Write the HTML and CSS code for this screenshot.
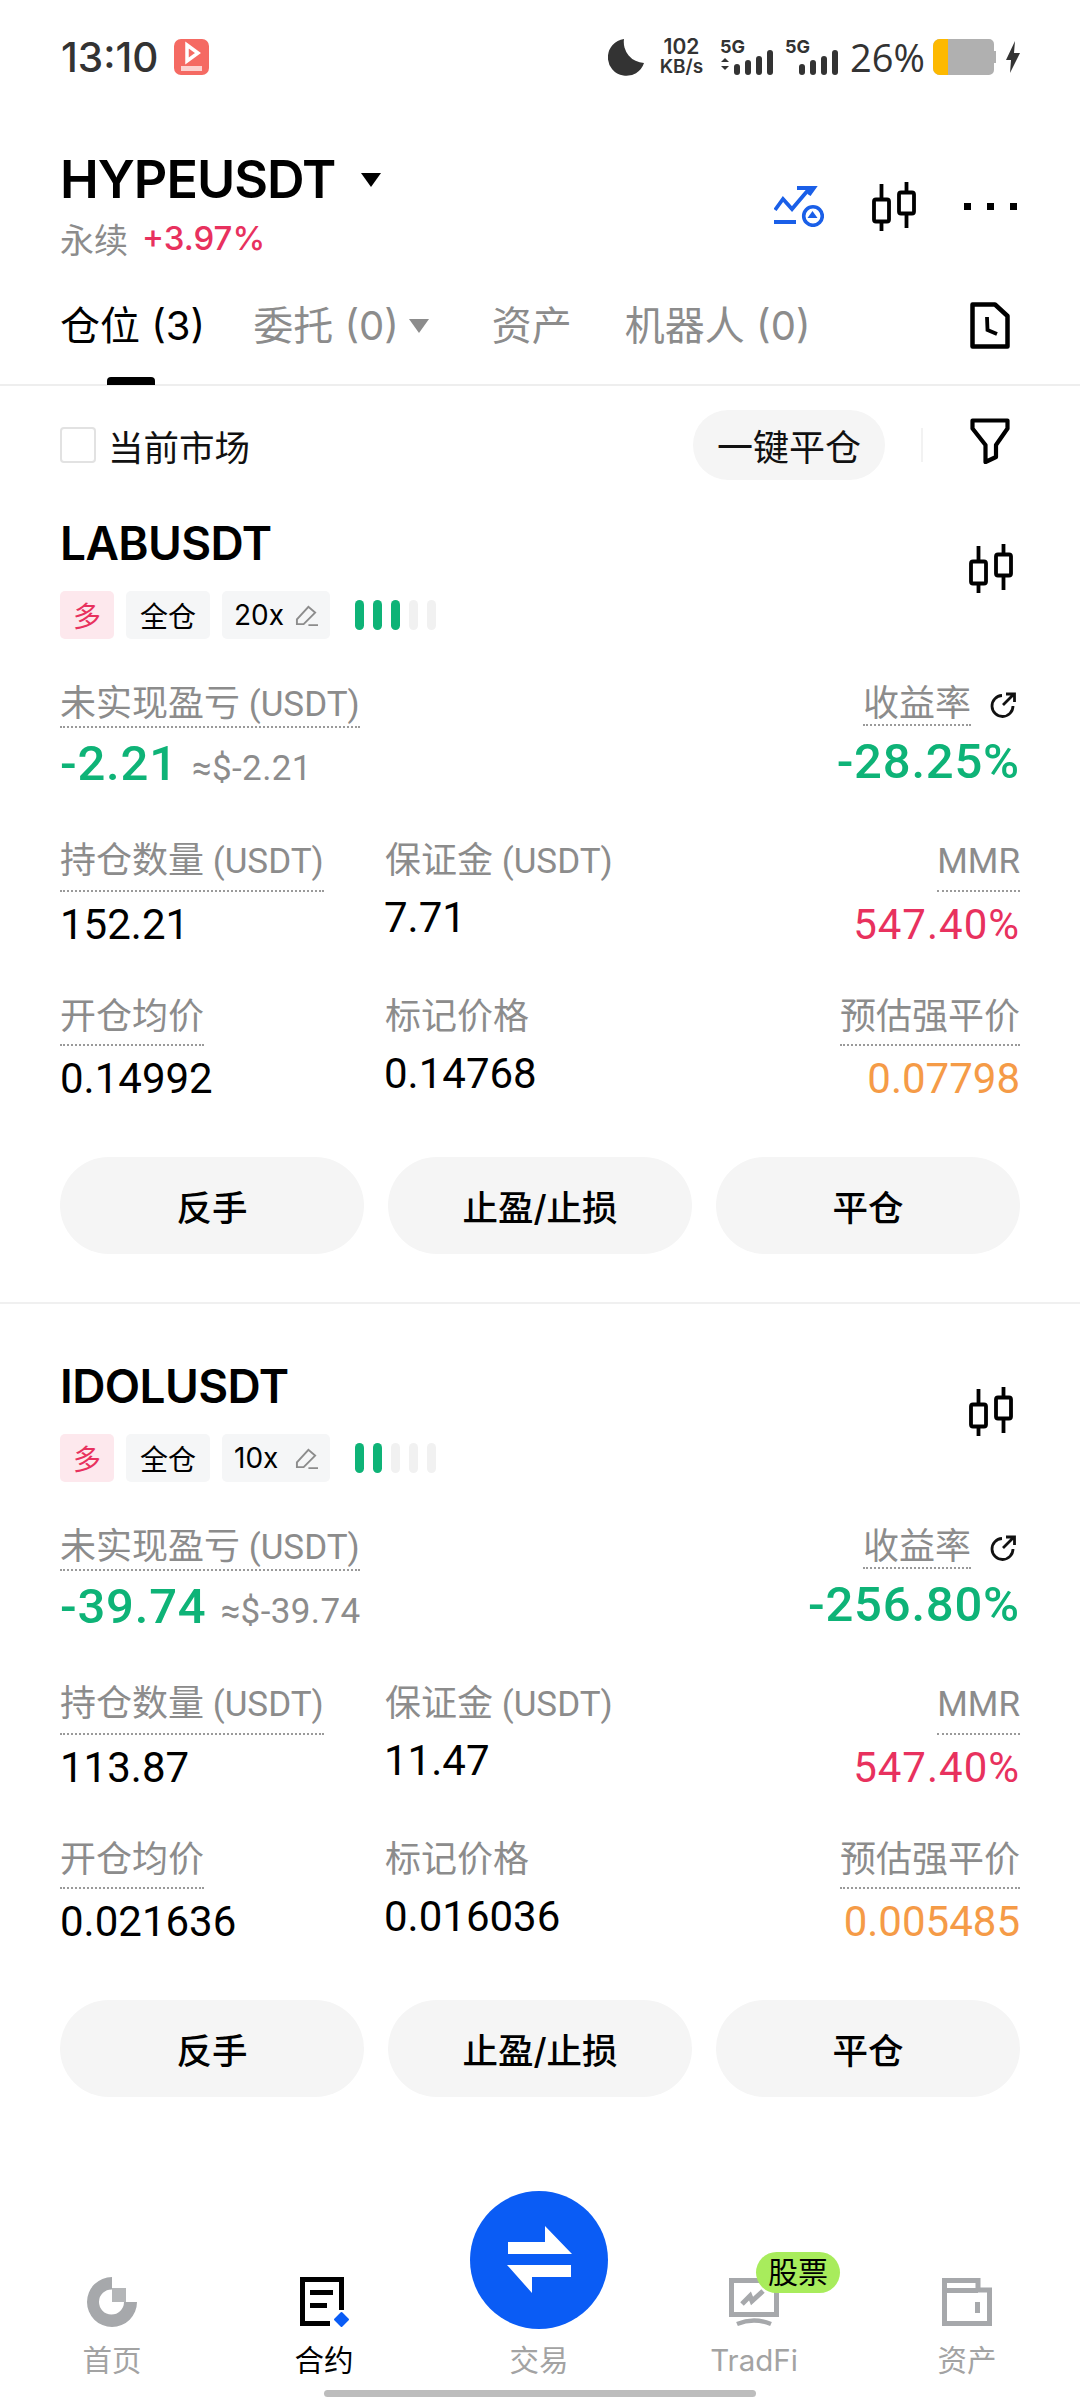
FILE: index.html
```html
<!DOCTYPE html>
<html lang="zh">
<head>
<meta charset="utf-8">
<title>HYPEUSDT</title>
<link rel="stylesheet" href="styles.css">
</head>
<body>
<svg class="defs" width="0" height="0" aria-hidden="true">
  <symbol id="candles" viewBox="0 0 44 49">
    <path d="M9.500 2v47M34.500 0v46" fill="none" stroke="currentColor" stroke-width="3.800"/>
    <rect x="2" y="17.500" width="15" height="22" rx="2" fill="#fff" stroke="currentColor" stroke-width="3.800"/>
    <rect x="27" y="10.500" width="15" height="21" rx="2" fill="#fff" stroke="currentColor" stroke-width="3.800"/>
  </symbol>
  <symbol id="share" viewBox="0 0 28 28">
    <path d="M13 4.500A10.500 10.500 0 1 0 24 15" fill="none" stroke="currentColor" stroke-width="2.800"/>
    <path d="M14 14 25 3M17 3h8.500v8" fill="none" stroke="currentColor" stroke-width="2.800"/>
  </symbol>
  <symbol id="pen" viewBox="0 0 24 24">
    <path d="M2 21v-5L14 3l7 6L9 21zM14 22h10" fill="none" stroke="currentColor" stroke-width="2"/>
  </symbol>
</svg>

<header class="status">
  <div class="status-left">
    <span class="clock">13:10</span>
    <svg class="app-badge" viewBox="0 0 35 36"><rect width="35" height="36" rx="7" fill="#f56a63"/><path d="M13 6l11 8-11 8z" fill="none" stroke="#fff" stroke-width="3.500"/><rect x="7" y="27" width="21" height="5" fill="#fff" opacity=".7"/></svg>
  </div>
  <div class="status-right">
    <svg class="moon" viewBox="0 0 36 37"><path d="M16 0A18.500 18.500 0 1 0 36 24 21 21 0 0 1 16 0z" fill="#333"/></svg>
    <div class="speed"><span>102</span><span>KB/s</span></div>
    <div class="signal">
      <span class="net">5G</span>
      <svg viewBox="0 0 54 25" class="bars"><path d="M1 12l4-4 4 4zM1 16l4 4 4-4z" fill="#333"/><rect x="14" y="14" width="6" height="11" rx="3" fill="#333"/><rect x="25" y="10" width="6" height="15" rx="3" fill="#333"/><rect x="36" y="6" width="6" height="19" rx="3" fill="#333"/><rect x="47" y="0" width="6" height="25" rx="3" fill="#333"/></svg>
    </div>
    <div class="signal">
      <span class="net">5G</span>
      <svg viewBox="0 0 54 25" class="bars"><rect x="14" y="14" width="6" height="11" rx="3" fill="#333"/><rect x="25" y="10" width="6" height="15" rx="3" fill="#333"/><rect x="36" y="6" width="6" height="19" rx="3" fill="#333"/><rect x="47" y="0" width="6" height="25" rx="3" fill="#333"/></svg>
    </div>
    <span class="battery-pct">26%</span>
    <svg class="battery" viewBox="0 0 63 36"><path d="M7 0h49a5 5 0 0 1 5 5v7h2v12h-2v7a5 5 0 0 1-5 5H7a7 7 0 0 1-7-7V7a7 7 0 0 1 7-7z" fill="#b0b0b0"/><path d="M7 0h8v36H7a7 7 0 0 1-7-7V7a7 7 0 0 1 7-7z" fill="#fdb900"/></svg>
    <svg class="bolt" viewBox="0 0 14 32"><path d="M9 0 0 19h5l-1 13 10-20H8z" fill="#333"/></svg>
  </div>
</header>

<section class="market">
  <div class="market-info">
    <div class="symbol-row"><h1 class="symbol">HYPEUSDT</h1><span class="caret"></span></div>
    <div class="sub-row"><span class="perp">永续</span><span class="change">+3.97%</span></div>
  </div>
  <div class="market-actions">
    <svg class="ic-strategy" viewBox="0 0 50 41"><path d="M1 24 9 13l9 10L35 3M23 2h17l-5 7" fill="none" stroke="#1a5fe8" stroke-width="3.800"/><path d="M0 36h22" stroke="#1a5fe8" stroke-width="4"/><circle cx="39" cy="30" r="9.300" fill="none" stroke="#1a5fe8" stroke-width="3.600"/><path d="M38.500 25l5 7h-10z" fill="#1a5fe8"/></svg>
    <svg class="ic-candles"><use href="#candles"/></svg>
    <svg class="ic-more" viewBox="0 0 53 7"><rect width="7" height="7" fill="#000"/><rect x="23" width="7" height="7" fill="#000"/><rect x="46" width="7" height="7" fill="#000"/></svg>
  </div>
</section>

<nav class="tabs">
  <a class="tab active">仓位 (3)</a>
  <a class="tab has-caret">委托 (0)<span class="tab-caret"></span></a>
  <a class="tab">资产</a>
  <a class="tab bots">机器人 (0)</a>
  <svg class="ic-history" viewBox="0 0 40 47"><path d="M2.500 2.500H25L37.500 14v30.500h-35z" fill="none" stroke="#000" stroke-width="4.500" stroke-linejoin="round"/><path d="M17 15l.5 13L27 32" fill="none" stroke="#000" stroke-width="3.800"/></svg>
</nav>

<div class="filters">
  <label class="market-check"><span class="checkbox"></span>当前市场</label>
  <div class="filter-actions">
    <button class="close-all">一键平仓</button>
    <span class="vr"></span>
    <svg class="ic-filter" viewBox="0 0 40 46"><path d="M2.500 2.500h35v8L26 27v12l-10.500 5V27L2.500 10.500z" fill="none" stroke="#000" stroke-width="4.200" stroke-linejoin="round"/></svg>
  </div>
</div>

<main>
  <article class="position">
    <div class="pos-head">
      <div>
        <h2 class="pos-symbol">LABUSDT</h2>
        <div class="tags">
          <span class="tag long">多</span>
          <span class="tag">全仓</span>
          <span class="tag leverage">20x<svg class="ic-pen"><use href="#pen"/></svg></span>
          <span class="risk"><i class="on"></i><i class="on"></i><i class="on"></i><i></i><i></i></span>
        </div>
      </div>
      <svg class="ic-candles pos-candles"><use href="#candles"/></svg>
    </div>
    <div class="pnl">
      <div>
        <span class="label dotted">未实现盈亏<span class="unit"> (USDT)</span></span>
        <div class="pnl-value"><span class="big green">-2.21</span><span class="approx">≈$-2.21</span></div>
      </div>
      <div class="right">
        <div class="label-row"><span class="label dotted">收益率</span><svg class="ic-share"><use href="#share"/></svg></div>
        <span class="big green">-28.25%</span>
      </div>
    </div>
    <div class="stats">
      <div class="stat"><span class="label dotted">持仓数量<span class="unit"> (USDT)</span></span><span class="val">152.21</span></div>
      <div class="stat mid"><span class="label">保证金<span class="unit"> (USDT)</span></span><span class="val">7.71</span></div>
      <div class="stat right"><span class="label dotted"><span class="unit">MMR</span></span><span class="val pink">547.40%</span></div>
      <div class="stat"><span class="label dotted">开仓均价</span><span class="val">0.14992</span></div>
      <div class="stat mid"><span class="label">标记价格</span><span class="val">0.14768</span></div>
      <div class="stat right"><span class="label dotted">预估强平价</span><span class="val orange">0.07798</span></div>
    </div>
    <div class="actions"><button>反手</button><button>止盈/止损</button><button>平仓</button></div>
  </article>

  <article class="position">
    <div class="pos-head">
      <div>
        <h2 class="pos-symbol">IDOLUSDT</h2>
        <div class="tags">
          <span class="tag long">多</span>
          <span class="tag">全仓</span>
          <span class="tag leverage">10x<svg class="ic-pen"><use href="#pen"/></svg></span>
          <span class="risk"><i class="on"></i><i class="on"></i><i></i><i></i><i></i></span>
        </div>
      </div>
      <svg class="ic-candles pos-candles"><use href="#candles"/></svg>
    </div>
    <div class="pnl">
      <div>
        <span class="label dotted">未实现盈亏<span class="unit"> (USDT)</span></span>
        <div class="pnl-value"><span class="big green">-39.74</span><span class="approx">≈$-39.74</span></div>
      </div>
      <div class="right">
        <div class="label-row"><span class="label dotted">收益率</span><svg class="ic-share"><use href="#share"/></svg></div>
        <span class="big green">-256.80%</span>
      </div>
    </div>
    <div class="stats">
      <div class="stat"><span class="label dotted">持仓数量<span class="unit"> (USDT)</span></span><span class="val">113.87</span></div>
      <div class="stat mid"><span class="label">保证金<span class="unit"> (USDT)</span></span><span class="val">11.47</span></div>
      <div class="stat right"><span class="label dotted"><span class="unit">MMR</span></span><span class="val pink">547.40%</span></div>
      <div class="stat"><span class="label dotted">开仓均价</span><span class="val">0.021636</span></div>
      <div class="stat mid"><span class="label">标记价格</span><span class="val">0.016036</span></div>
      <div class="stat right"><span class="label dotted">预估强平价</span><span class="val orange">0.005485</span></div>
    </div>
    <div class="actions"><button>反手</button><button>止盈/止损</button><button>平仓</button></div>
  </article>
</main>

<footer class="tabbar">
  <a class="nav-item">
    <svg viewBox="0 0 50 50"><path d="M25 0A25 25 0 1 0 50 25H37A12.500 12.500 0 1 1 25 12.500z" fill="#a6a8ab"/><rect x="25" y="11" width="14" height="14" fill="#b4b6b8"/></svg>
    <span>首页</span>
  </a>
  <a class="nav-item current">
    <svg viewBox="0 0 50 50"><path d="M42.500 33V2.500h-39v44H31" fill="none" stroke="#000" stroke-width="5"/><path d="M11 15.500h23M11 28.500h17" stroke="#000" stroke-width="5"/><path d="M42.500 36l6.500 6.500-6.500 6.500-6.500-6.500z" fill="#0a5cf5" stroke="#0a5cf5" stroke-width="2" stroke-linejoin="round"/></svg>
    <span>合约</span>
  </a>
  <a class="nav-item trade">
    <span class="trade-btn"><svg viewBox="0 0 66 70"><path d="M2 17h37V1l27 28H2zM65 40H1l25 28V52h39z" fill="#fff"/></svg></span>
    <span>交易</span>
  </a>
  <a class="nav-item">
    <span class="badge">股票</span>
    <svg viewBox="0 0 50 50"><path d="M2.500 3.500h45v34h-45z" fill="none" stroke="#a6a8ab" stroke-width="5"/><path d="M8 47q17-7 34 0" fill="none" stroke="#a6a8ab" stroke-width="4.500"/><path d="M13 27l8-8 2 5 11-10" fill="none" stroke="#a6a8ab" stroke-width="5"/></svg>
    <span>TradFi</span>
  </a>
  <a class="nav-item">
    <svg viewBox="0 0 50 50"><path d="M2.500 46.500v-43H36V13h11.500v33.500zM2.500 13.500H36" fill="none" stroke="#a6a8ab" stroke-width="5"/><rect x="33" y="25" width="5" height="11" fill="#a6a8ab"/></svg>
    <span>资产</span>
  </a>
  <span class="home-bar"></span>
</footer>
</body>
</html>
```

FILE: styles.css
```css
* { box-sizing: border-box; margin: 0; padding: 0; }

html, body { background: #fff; }

body {
  width: 1080px;
  height: 2400px;
  position: relative;
  overflow: hidden;
  color: #000;
  font-family: Inter, "Noto Sans CJK SC", sans-serif;
}

.defs { position: absolute; }

/* System status bar */
.status {
  height: 114px;
  padding: 0 60px 0 61px;
  display: flex;
  align-items: center;
  justify-content: space-between;
  color: #333;
}
.status-left { display: flex; align-items: center; gap: 16px; }
.clock { font-size: 40.5px; font-weight: 500; }
.app-badge { width: 35px; height: 36px; }
.status-right { display: flex; align-items: center; }
.moon { width: 36px; height: 37px; margin-right: 16px; }
.speed {
  width: 43px;
  display: flex;
  flex-direction: column;
  align-items: center;
  font-size: 19px;
  line-height: 20px;
  font-weight: 600;
  margin-right: 17px;
  white-space: nowrap;
}
.speed span:first-child { font-size: 21px; }
.signal { position: relative; width: 65px; height: 36px; }
.net {
  position: absolute;
  left: 0;
  top: 0;
  font-size: 18px;
  line-height: 16px;
  font-weight: 700;
}
.bars { position: absolute; left: 0; bottom: 0; width: 54px; height: 25px; }
.battery-pct { font-family: "Open Sans", sans-serif; font-size: 38px; width: 73px; margin-right: 10px; white-space: nowrap; }
.battery { width: 63px; height: 36px; margin-right: 10px; }
.bolt { width: 14px; height: 32px; }

/* Market header */
.market {
  height: 176px;
  padding: 36px 63px 0 60px;
  display: flex;
  justify-content: space-between;
  align-items: flex-start;
}
.symbol-row { display: flex; align-items: center; height: 60px; }
.symbol { font-size: 52px; font-weight: 600; letter-spacing: -1px; line-height: 60px; }
.caret {
  margin-left: 26px;
  width: 0;
  height: 0;
  border-left: 10px solid transparent;
  border-right: 10px solid transparent;
  border-top: 14px solid #000;
}
.sub-row { display: flex; align-items: center; gap: 14px; margin-top: 6px; height: 44px; }
.perp { font-size: 34px; color: #8c8c8c; }
.change { font-size: 33px; color: #e8315e; font-weight: 500; }
.market-actions { display: flex; align-items: center; gap: 48px; margin-top: 32px; }
.ic-strategy { width: 50px; height: 41px; }
.ic-candles { width: 44px; height: 49px; display: block; color: #000; }
.ic-more { width: 53px; height: 7px; }

/* Section tabs */
.tabs {
  height: 96px;
  padding: 0 70px 0 60px;
  display: flex;
  align-items: flex-start;
  gap: 48px;
  border-bottom: 2px solid #eeeeee;
  position: relative;
}
.tab { font-size: 40px; line-height: 52px; margin-top: 10px; color: #8c8c8c; display: flex; align-items: center; white-space: nowrap; }
.tab.active { color: #000; position: relative; }
.tab.active::after {
  content: "";
  position: absolute;
  left: 47px;
  top: 77px;
  width: 48px;
  height: 8px;
  background: #000;
  border-radius: 4px 4px 0 0;
}
.has-caret { margin-right: 15px; }
.tab.bots { margin-left: 5px; }
.tab-caret {
  margin-left: 10px;
  border-left: 10px solid transparent;
  border-right: 10px solid transparent;
  border-top: 14px solid #8c8c8c;
}
.ic-history { width: 40px; height: 47px; margin-left: auto; margin-top: 12px; }

/* Filter row */
.filters {
  height: 95px;
  padding: 24px 70px 0 60px;
  display: flex;
  justify-content: space-between;
  align-items: flex-start;
}
.market-check { display: flex; align-items: center; gap: 12px; font-size: 35.5px; height: 70px; color: #111; }
.checkbox { width: 36px; height: 36px; border: 2px solid #e2e2e2; border-radius: 4px; }
.filter-actions { display: flex; align-items: center; gap: 36px; }
.close-all {
  width: 192px;
  height: 70px;
  border: 0;
  border-radius: 35px;
  background: #f5f5f5;
  font: inherit;
  font-size: 36px;
  color: #111;
}
.vr { width: 2px; height: 34px; background: #f2f2f2; }
.ic-filter { width: 40px; height: 46px; margin-left: 11px; margin-top: -8px; }

/* Position card */
.position { padding: 34px 60px 0; }
.position:first-child { height: 823px; border-bottom: 2px solid #f0f0f0; }
.position + .position { margin-top: 20px; }
.pos-head { display: flex; justify-content: space-between; align-items: flex-start; height: 167px; }
.pos-symbol { font-size: 46px; font-weight: 600; letter-spacing: -0.6px; line-height: 56px; }
.pos-candles { margin-top: 29px; margin-right: 7px; }
.tags { display: flex; align-items: center; gap: 12px; margin-top: 20px; height: 48px; }
.tag {
  height: 48px;
  padding: 0 14px;
  background: #f5f6f7;
  border-radius: 5px;
  font-size: 28px;
  display: flex;
  align-items: center;
}
.tag.long { width: 54px; padding: 0; justify-content: center; background: #fde8ed; color: #e8315e; }
.tag.leverage { width: 108px; padding: 0 12px; justify-content: space-between; }
.ic-pen { width: 23px; height: 23px; color: #8c8c8c; }
.risk { display: flex; gap: 9px; margin-left: 13px; }
.risk i { width: 9px; height: 30px; border-radius: 5px; background: #f1f1f1; }
.risk i.on { background: #0eb377; }

.label { font-size: 36px; line-height: 42px; color: #8c8c8c; display: inline-block; white-space: nowrap; }
.unit { font-family: Roboto, sans-serif; font-size: 35px; }
.dotted { border-bottom: 2px dotted #9a9a9a; }
.right { text-align: right; align-items: flex-end; }

.pnl { display: flex; justify-content: space-between; height: 157px; }
.big { font-family: Roboto, sans-serif; font-size: 49px; font-weight: 500; line-height: 56px; letter-spacing: 0.8px; }
.green { color: #0eb377; }
.pink { color: #e8315e; letter-spacing: 1px; }
.orange { color: #f59b47; }
.pnl-value { display: flex; align-items: baseline; gap: 14px; margin-top: 8px; }
.approx { font-family: Roboto, sans-serif; font-size: 35px; letter-spacing: 0.4px; color: #8c8c8c; }
.label-row { display: flex; align-items: flex-start; gap: 18px; justify-content: flex-end; margin-right: 3px; }
.ic-share { width: 28px; height: 28px; margin-top: 9px; color: #111; }
.pnl .right .big { display: block; margin-top: 8px; }

.stats { display: grid; grid-template-columns: 325px 1fr 1fr; grid-auto-rows: 156px; }
.stat { display: flex; flex-direction: column; align-items: flex-start; }
.stat.right { align-items: flex-end; }
.stat .dotted { padding-bottom: 7px; }
.val { font-family: Roboto, sans-serif; font-size: 42px; line-height: 52px; margin-top: 7px; }
.stat.mid .val { margin-top: 9px; margin-left: -1px; }
.stat.mid:nth-child(5) .val { margin-top: 11px; }

.actions { display: flex; justify-content: space-between; margin-top: 6px; }
.actions button {
  width: 304px;
  height: 97px;
  border: 0;
  border-radius: 49px;
  background: #f5f5f5;
  font: inherit;
  font-size: 35.5px;
  font-weight: 500;
  color: #000;
}

/* Bottom navigation */
.tabbar {
  position: absolute;
  left: 0;
  right: 0;
  bottom: 0;
  height: 210px;
  display: grid;
  grid-template-columns: 112px 212px 215px 215px 213px;
}
.nav-item {
  position: relative;
  height: 100%;
  display: flex;
  flex-direction: column;
  align-items: center;
  justify-self: end;
  width: 120px;
  margin-right: -60px;
  padding-top: 87px;
  color: #a3a3a3;
  font-size: 29.5px;
}
.nav-item svg { width: 50px; height: 50px; display: block; overflow: visible; }
.nav-item span:last-of-type { line-height: 40px; margin-top: 13px; white-space: nowrap; }
.nav-item.current { color: #000; }
.trade { padding-top: 137px; }
.nav-item .trade-btn {
  position: absolute;
  left: -9px;
  top: 1px;
  width: 138px;
  height: 138px;
  border-radius: 50%;
  background: #0a5cf5;
  display: flex;
  align-items: center;
  justify-content: center;
  margin: 0;
}
.nav-item .trade-btn svg { width: 66px; height: 70px; }
.badge {
  position: absolute;
  left: 62px;
  top: 62px;
  width: 84px;
  height: 41px;
  border-radius: 21px;
  background: #a8ec5c;
  color: #000;
  font-size: 30px;
  line-height: 41px;
  text-align: center;
  z-index: 1;
}
.home-bar {
  position: absolute;
  left: 324px;
  bottom: 3px;
  width: 432px;
  height: 7px;
  border-radius: 4px;
  background: #bdbdbd;
}
```
